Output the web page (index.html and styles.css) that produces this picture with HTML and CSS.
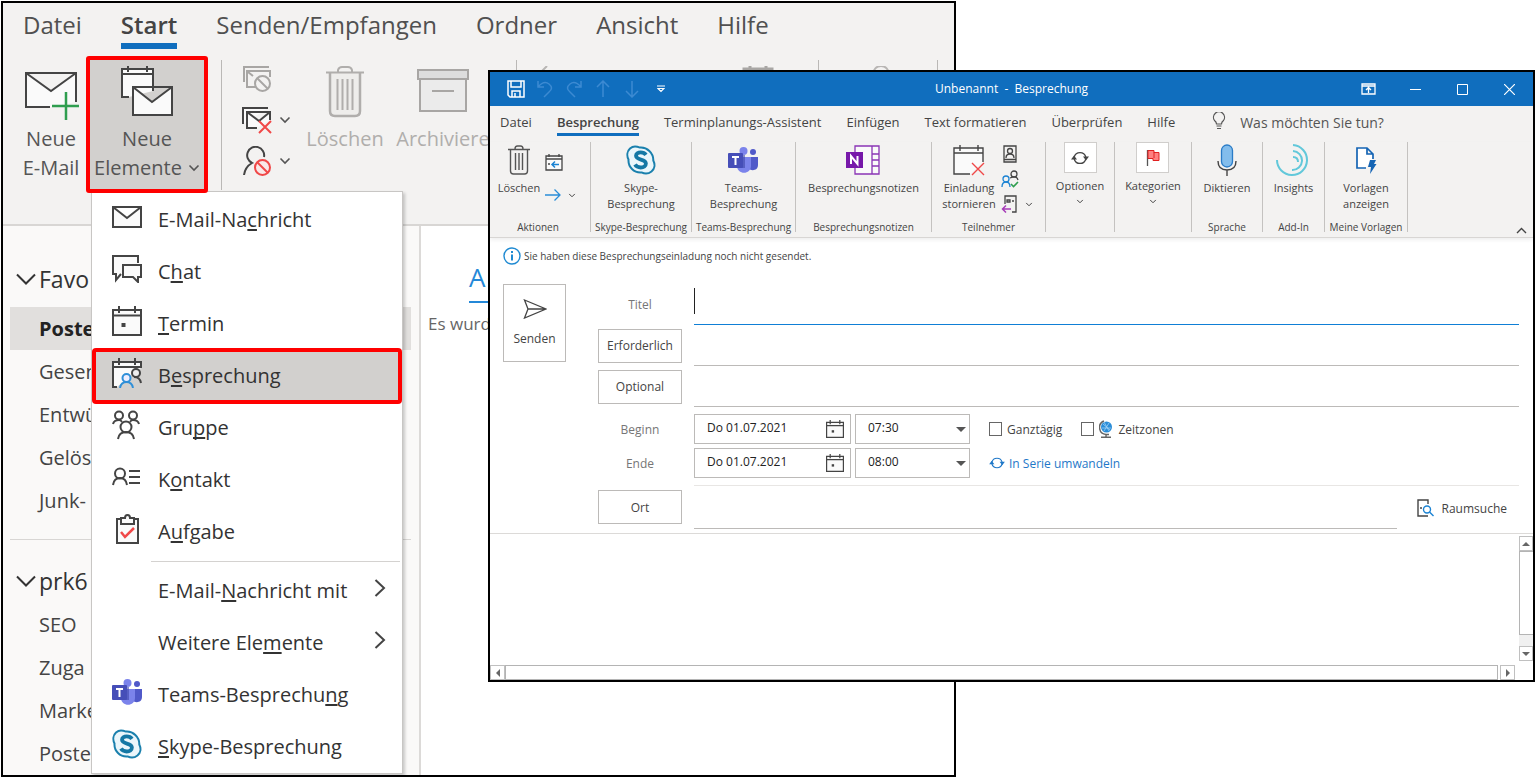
FILE: index.html
```html
<!DOCTYPE html>
<html lang="de">
<head>
<meta charset="utf-8">
<title>Unbenannt - Besprechung</title>
<link rel="stylesheet" href="styles.css">
</head>
<body>
<svg class="defs" aria-hidden="true">
  <symbol id="chevron" viewBox="0 0 12 8"><path d="M1.500 1.500 6 6l4.500-4.500" fill="none" stroke="currentColor" stroke-width="1.600"/></symbol>
  <symbol id="chevron-wide" viewBox="0 0 20 13"><path d="M1 1.500 10 10.500l9-9" fill="none" stroke="currentColor" stroke-width="2"/></symbol>
  <symbol id="arrow-right" viewBox="0 0 12 20"><path d="M1.500 2 10 10l-8.500 8" fill="none" stroke="#444" stroke-width="2"/></symbol>
  <symbol id="envelope" viewBox="0 0 30 22"><path d="M1 1h28v20H1zM1 1l14 11L29 1" fill="#fafafa" stroke="#444" stroke-width="2"/></symbol>
  <symbol id="calendar" viewBox="0 0 30 30"><path d="M1 4h28v25H1z" fill="#fafafa" stroke="#444" stroke-width="2"/><path d="M1 9.500h28M7 0v7M23 0v7" fill="none" stroke="#444" stroke-width="2"/><path d="M9.500 17h4v4h-4z" fill="#444"/></symbol>
  <symbol id="skype" viewBox="0 0 30 30"><path d="M9 1.500c2 0 3.500.5 5 1.100C21 2 27.500 8 27.300 15.500c2 4 1.400 8.500-1.800 11-3 2.400-6.800 2.500-10 .9C8 28 2 22 2.500 14.500c-2-4-1.200-8.500 1.500-11C5.500 2.200 7.200 1.500 9 1.500z" fill="#eaf6fb" stroke="#1a80ad" stroke-width="2"/><path d="M20 9.800c-1.300-1.800-3.200-2.500-5.300-2.500-2.700 0-4.700 1.400-4.700 3.500 0 5 9.900 2.500 9.900 7.700 0 2.500-2.200 4-5.200 4-2.400 0-4.500-.9-5.700-2.900" fill="none" stroke="#1478a5" stroke-width="3.800"/></symbol>
  <symbol id="teams" viewBox="0 0 30 26"><circle cx="15.500" cy="4" r="4" fill="#7b83eb"/><circle cx="25" cy="5" r="3" fill="#5059c9"/><path d="M20 10h10v8c0 6-8 7-10 2z" fill="#5059c9"/><path d="M9 10h14v9c0 9-14 9-14 0z" fill="#7b83eb"/><path d="M9 8h8v13H9z" fill="#4047a8" opacity=".6"/><rect y="6" width="15" height="15" rx="1" fill="#464eb8"/><path d="M4 10h7M7.500 10v8" stroke="#fff" stroke-width="2"/></symbol>
  <symbol id="trash" viewBox="0 0 38 52"><path d="M4 7v38q0 5 5 5h20q5 0 5-5V7" fill="currentColor" fill-opacity=".08" stroke="currentColor" stroke-width="2.500"/><path d="M0 6.500h38M12 6V4q1-3 4-3h6q3 0 4 3v2M11.500 13v31M16.500 13v31M21.500 13v31M26.500 13v31" fill="none" stroke="currentColor" stroke-width="2"/></symbol>
  <symbol id="sync" viewBox="0 0 18 16"><path d="M3.200 7A6 6 0 0 1 14.800 7M14.800 9A6 6 0 0 1 3.200 9" fill="none" stroke="currentColor" stroke-width="1.300"/><path d="M0 9.500 3 5.500l3 4zM12 6.500l3 4 3-4z" fill="currentColor"/></symbol>
</svg>

<main class="desktop">
<section class="window outlook">
  <nav class="tabs">
    <a href="#">Datei</a><a href="#" class="active">Start</a><a href="#">Senden/Empfangen</a><a href="#">Ordner</a><a href="#">Ansicht</a><a href="#">Hilfe</a>
  </nav>
  <div class="ribbon">
    <button class="tool new-mail">
      <svg width="54" height="52" viewBox="0 0 54 52"><path d="M26 41H2V7h50v29M2 7l25 18L52 7" fill="#fafafa" stroke="#444" stroke-width="2"/><path d="M42 26v28M28 40h27" stroke="#2f9e4f" stroke-width="2.500"/></svg>
      <span>Neue</span><span>E-Mail</span>
    </button>
    <button class="tool new-items">
      <svg width="54" height="52" viewBox="0 0 54 52"><path d="M9 31H2V3h31v22" fill="#fafafa" stroke="#444" stroke-width="2"/><path d="M2 8h31M8 0v6M27 0v6" stroke="#444" stroke-width="2"/><path d="M13 21h39v28H13zM13 21l19 15 20-15" fill="#fafafa" stroke="#444" stroke-width="2"/></svg>
      <span>Neue</span><span>Elemente <svg class="chev" width="12" height="8"><use href="#chevron"/></svg></span>
    </button>
    <i class="rule"></i>
    <div class="stack">
      <button aria-label="Ignorieren"><svg width="30" height="28" viewBox="0 0 30 28" fill="none" stroke="#a8a6a4" stroke-width="2"><path d="M2 17V2h25M14 22H5V6h23v6M6 7l5 4"/><circle cx="20.500" cy="18.500" r="7.500" fill="#f3f2f1"/><path d="m15 13 11 11"/></svg></button>
      <button aria-label="Aufräumen"><svg width="30" height="28" viewBox="0 0 30 28" fill="none" stroke="#444" stroke-width="2"><path d="M1 18V2h25M15 22H5V6h23v8M5 6l12 9L28 6" fill="#fafafa"/><path d="m17 15 12 12M29 15 17 27" stroke="#f04848"/></svg><svg class="chev" width="12" height="8"><use href="#chevron"/></svg></button>
      <button aria-label="Junk-E-Mail"><svg width="30" height="30" viewBox="0 0 30 30" fill="none" stroke="#444" stroke-width="2"><path d="M2 29q1-8 8-12a8.500 8.500 0 1 1 12-6"/><circle cx="20.500" cy="21.500" r="7.500" stroke="#f04848" fill="#f9e8e8"/><path d="m15 16 11 11" stroke="#f04848"/></svg><svg class="chev" width="12" height="8"><use href="#chevron"/></svg></button>
    </div>
    <button class="tool delete" disabled><svg width="38" height="52"><use href="#trash"/></svg><span>Löschen</span></button>
    <button class="tool archive" disabled><svg width="52" height="52" viewBox="0 0 52 52"><path d="M3 12h46v33H3z" fill="#ebebeb" stroke="#a8a6a4" stroke-width="2"/><path d="M1 4h50v9H1z" fill="#ddd" stroke="#a8a6a4" stroke-width="2"/><path d="M15 25h22" stroke="#a8a6a4" stroke-width="2"/></svg><span>Archiviere</span></button>
    <div class="more">
      <i class="rule"></i>
      <svg width="30" height="30" viewBox="0 0 30 30" fill="none" stroke="#b8b6b4" stroke-width="2"><path d="M12 0 2 10l10 10M2 10h26"/></svg>
      <svg class="meet" width="32" height="30" viewBox="0 0 32 30" fill="none" stroke="#a8a6a4" stroke-width="3"><path d="M2 28V3h28v25M8 0v6M24 0v6"/></svg>
      <i class="rule"></i>
      <svg class="person" width="32" height="30" viewBox="0 0 32 30" fill="none" stroke="#b8b6b4" stroke-width="2"><circle cx="10" cy="8" r="8"/><path d="M24 5h8"/></svg>
      <i class="rule"></i>
    </div>
  </div>
  <div class="content">
    <aside class="folders">
      <h2><svg width="20" height="13"><use href="#chevron-wide"/></svg>Favo</h2>
      <ul><li class="selected">Poste</li><li>Gesen</li><li>Entwü</li><li>Gelös</li><li>Junk-</li></ul>
      <hr>
      <h2><svg width="20" height="13"><use href="#chevron-wide"/></svg>prk6</h2>
      <ul><li>SEO</li><li>Zuga</li><li>Marke</li><li>Poste</li></ul>
    </aside>
    <div class="list"><a href="#">A</a><p>Es wurd</p></div>
  </div>

  <div class="menu" role="menu">
    <button role="menuitem"><svg width="30" height="22"><use href="#envelope"/></svg><span>E-Mail-Na<u>c</u>hricht</span></button>
    <button role="menuitem"><svg width="30" height="28" viewBox="0 0 30 28" fill="#fafafa" stroke="#444" stroke-width="2"><path d="M26 8V1H1v18h3v6l5-6"/><path d="M11 10h18v12h-3v5l-5-5H11z"/></svg><span>C<u>h</u>at</span></button>
    <button role="menuitem"><svg width="30" height="30"><use href="#calendar"/></svg><span><u>T</u>ermin</span></button>
    <button role="menuitem" class="marked"><svg width="30" height="30" viewBox="0 0 30 30" fill="none" stroke="#444" stroke-width="2"><path d="M5 29H1V4h28v6" fill="#fafafa"/><path d="M1 9h28M7 0v7M23 0v7"/><circle cx="24" cy="15" r="4" fill="#eee"/><path d="M22 19q6 0 7 6"/><circle cx="14.500" cy="20" r="4" stroke="#2f8fd8" fill="#eef"/><path d="M8 30q1-6 6.500-6t6.500 6" stroke="#2f8fd8"/></svg><span>B<u>e</u>sprechung</span></button>
    <button role="menuitem"><svg width="30" height="30" viewBox="0 0 30 30" fill="none" stroke="#444" stroke-width="2"><circle cx="7" cy="5.500" r="4"/><circle cx="21" cy="5.500" r="4"/><circle cx="14" cy="17" r="5.500"/><path d="M1 14q1-4 6-4 2 0 3 2M27 14q-1-4-6-4-2 0-3 2M6 29q1-7 8-7t8 7"/></svg><span>Gru<u>p</u>pe</span></button>
    <button role="menuitem"><svg width="30" height="20" viewBox="0 0 30 20" fill="none" stroke="#444" stroke-width="2"><circle cx="8" cy="6.500" r="5"/><path d="M1 18q1-7 7-7t7 7M17 4h11M17 10h11M17 16h11"/></svg><span>K<u>o</u>ntakt</span></button>
    <button role="menuitem"><svg width="30" height="30" viewBox="0 0 30 30" fill="none" stroke="#444" stroke-width="2"><path d="M5 5h21v24H5z" fill="#fafafa"/><path d="M9 10V4h4q0-3 2.500-3T18 4h4v6z" fill="#fafafa"/><path d="m9 18 4 5 9-9" stroke="#f04848" stroke-width="2.500"/></svg><span>A<u>u</u>fgabe</span></button>
    <hr>
    <button role="menuitem"><i></i><span>E-Mail-<u>N</u>achricht mit</span><svg class="sub" width="12" height="20"><use href="#arrow-right"/></svg></button>
    <button role="menuitem"><i></i><span>Weitere Ele<u>m</u>ente</span><svg class="sub" width="12" height="20"><use href="#arrow-right"/></svg></button>
    <button role="menuitem"><svg width="30" height="26"><use href="#teams"/></svg><span>Teams-Besprechu<u>n</u>g</span></button>
    <button role="menuitem"><svg width="30" height="30"><use href="#skype"/></svg><span><u>S</u>kype-Besprechung</span></button>
  </div>
</section>

<section class="window meeting">
  <header class="titlebar">
    <div class="quick">
      <button aria-label="Speichern"><svg width="18" height="18" viewBox="0 0 18 18" fill="none" stroke="#fff" stroke-width="1.500"><path d="M1 1h16v16H3l-2-2zM4 1v6h10V1M5 17v-6h8v6M8 13v4"/></svg></button>
      <button class="dim" aria-label="Rückgängig"><svg width="16" height="18" viewBox="0 0 16 18" fill="none" stroke="currentColor" stroke-width="1.500"><path d="M1 1v6h6M1 7q6-7 11-3 5 4 0 8l-5 5"/></svg></button>
      <button class="dim" aria-label="Wiederholen"><svg width="16" height="18" viewBox="0 0 16 18" fill="none" stroke="currentColor" stroke-width="1.500"><path d="M15 1v6H9M15 7Q9 0 4 4q-5 4 0 8l5 5"/></svg></button>
      <button class="dim" aria-label="Vorheriges Element"><svg width="14" height="18" viewBox="0 0 14 18" fill="none" stroke="currentColor" stroke-width="1.500"><path d="M7 17V1M1 7l6-6 6 6"/></svg></button>
      <button class="dim" aria-label="Nächstes Element"><svg width="14" height="18" viewBox="0 0 14 18" fill="none" stroke="currentColor" stroke-width="1.500"><path d="M7 1v16M1 11l6 6 6-6"/></svg></button>
      <button aria-label="Anpassen"><svg width="8" height="8" viewBox="0 0 8 8" fill="none" stroke="#fff" stroke-width="1.200"><path d="M0 1h8M1 3.500 4 6.500l3-3z"/></svg></button>
    </div>
    <h1>Unbenannt&nbsp; -&nbsp; Besprechung</h1>
    <div class="controls">
      <button aria-label="Menüband"><svg width="15" height="12" viewBox="0 0 15 12" fill="none" stroke="#fff" stroke-width="1.300"><path d="M1 1h13v10H1zM1 3h13M7.500 10V5M5 7l2.500-2.500L10 7"/></svg></button>
      <button aria-label="Minimieren"><svg width="11" height="11" viewBox="0 0 11 11"><path d="M0 5.500h11" stroke="#fff"/></svg></button>
      <button aria-label="Maximieren"><svg width="11" height="11" viewBox="0 0 11 11"><path d="M.5.5h10v10H.5z" fill="none" stroke="#fff"/></svg></button>
      <button aria-label="Schließen"><svg width="11" height="11" viewBox="0 0 11 11"><path d="m0 0 11 11M11 0 0 11" stroke="#fff" stroke-width="1.200"/></svg></button>
    </div>
  </header>
  <nav class="tabs">
    <a href="#">Datei</a><a href="#" class="active">Besprechung</a><a href="#">Terminplanungs-Assistent</a><a href="#">Einfügen</a><a href="#">Text formatieren</a><a href="#">Überprüfen</a><a href="#">Hilfe</a>
    <label class="tellme"><svg width="14" height="18" viewBox="0 0 14 18" fill="none" stroke="#555" stroke-width="1.200"><path d="M4.500 12q0-2-2-3.500a5.500 5.500 0 1 1 9 0q-2 1.500-2 3.500zM4.500 14h5M5 16.500h4"/></svg><input placeholder="Was möchten Sie tun?" aria-label="Was möchten Sie tun?"></label>
  </nav>
  <div class="ribbon">
    <div class="group g-actions">
      <div class="items">
        <button class="tool"><svg width="32" height="30" viewBox="0 0 32 30"><g fill="none" stroke="#555" stroke-width="1.400"><path d="M7.500 5v21q0 3 3 3h11q3 0 3-3V5M5 4.500h22M12 4q0-3 2.500-3h3Q20 1 20 4M12.500 8v17M16 8v17M19.500 8v17"/></g></svg><span>Löschen</span></button>
        <div class="side two">
          <button aria-label="In Kalender kopieren"><svg width="18" height="18" viewBox="0 0 18 18" fill="none" stroke="#444" stroke-width="1.300"><path d="M1 3h16v14H1zM1 6h16M4 1v3M14 1v3" fill="#fafafa"/><path d="M14 11.500H7M10 8.500l-3 3 3 3" stroke="#1b83d3" stroke-width="1.500"/><path d="M3 11h2" /></svg></button>
          <button aria-label="Weiterleiten"><svg width="17" height="14" viewBox="0 0 17 14"><path d="M0 7h15M9.500 1.500 15 7l-5.500 5.500" fill="none" stroke="#2a8dd8" stroke-width="1.300"/></svg><svg class="chev" width="8" height="5"><use href="#chevron"/></svg></button>
        </div>
      </div>
      <p>Aktionen</p>
    </div>
    <div class="group g-skype"><div class="items"><button class="tool"><svg width="30" height="30"><use href="#skype"/></svg><span>Skype-</span><span>Besprechung</span></button></div><p>Skype-Besprechung</p></div>
    <div class="group g-teams"><div class="items"><button class="tool"><svg width="30" height="26"><use href="#teams"/></svg><span>Teams-</span><span>Besprechung</span></button></div><p>Teams-Besprechung</p></div>
    <div class="group g-notes"><div class="items"><button class="tool"><svg width="34" height="30" viewBox="0 0 34 30" fill="none" stroke="#8a35b5" stroke-width="1.300"><path d="M9 1h24v28H9z" fill="#fafafa"/><path d="M26 1v28M26 9h7M26 15h7M26 21h7"/><path d="M0 7h17v16H0z" fill="#7719aa" stroke="none"/><path d="M5 19v-8l6.500 8v-8" stroke="#fff" stroke-width="2"/></svg><span>Besprechungsnotizen</span></button></div><p>Besprechungsnotizen</p></div>
    <div class="group g-people">
      <div class="items">
        <button class="tool"><svg width="32" height="32" viewBox="0 0 32 32" fill="none" stroke="#444" stroke-width="1.400"><path d="M17 30H1V4h29v14" fill="#fafafa"/><path d="M1 9h29M7 1v6M25 1v6"/><path d="m19 19 12 12M31 19 19 31" stroke="#f04848"/></svg><span>Einladung</span><span>stornieren</span></button>
        <div class="side">
          <button aria-label="Adressbuch"><svg width="18" height="18" viewBox="0 0 18 18" fill="none" stroke="#444" stroke-width="1.300"><path d="M3 1h12v16H3zM3 14.500h12"/><circle cx="9" cy="6" r="2.500"/><path d="M5 13q0-4 4-4t4 4"/></svg></button>
          <button aria-label="Namen überprüfen"><svg width="18" height="18" viewBox="0 0 18 18" fill="none" stroke="#444" stroke-width="1.300"><circle cx="13" cy="4" r="3"/><path d="M9 8q7-3 8 2"/><circle cx="5" cy="9" r="3" stroke="#1b83d3"/><path d="M1 17q0-5 4-5t4 5" stroke="#1b83d3"/><path d="m10 14 2.500 2.500L17 12" stroke="#2f9e4f" stroke-width="1.600"/></svg></button>
          <button aria-label="Antwortoptionen"><svg width="18" height="18" viewBox="0 0 18 18" fill="none" stroke="#444" stroke-width="1.300"><path d="M4 9V1h11v16H11M6 5h3v2H6zM11 6h2"/><path d="M10 14H2M5 10.500 1.500 14 5 17.500" stroke="#a63bb8" stroke-width="1.500"/></svg><svg class="chev" width="8" height="5"><use href="#chevron"/></svg></button>
        </div>
      </div>
      <p>Teilnehmer</p>
    </div>
    <div class="group g-options"><div class="items"><button class="tool boxed"><em><svg width="18" height="16"><use href="#sync"/></svg></em><span>Optionen</span><svg class="chev" width="8" height="5"><use href="#chevron"/></svg></button></div></div>
    <div class="group g-cat"><div class="items"><button class="tool boxed"><em><svg width="14" height="18" viewBox="0 0 14 18"><path d="M1.500 1v16" stroke="#555" stroke-width="1.300"/><path d="M2 1.500h6v2h5v8H7v-2H2z" fill="#ff8080" stroke="#e02020"/><path d="M8 3v6" stroke="#e02020"/></svg></em><span>Kategorien</span><svg class="chev" width="8" height="5"><use href="#chevron"/></svg></button></div></div>
    <div class="group g-speech"><div class="items"><button class="tool"><svg width="20" height="32" viewBox="0 0 20 32" fill="none"><rect x="4.500" y="1" width="11" height="22" rx="5.500" fill="#83bdec" stroke="#2a7cc7" stroke-width="1.300"/><path d="M1 17q0 9 9 9t9-9M10 26v6" stroke="#444" stroke-width="1.400"/></svg><span>Diktieren</span></button></div><p>Sprache</p></div>
    <div class="group g-addin"><div class="items"><button class="tool"><svg width="34" height="32" viewBox="0 0 34 32" fill="none" stroke="#62c8da" stroke-width="2"><path d="M17 1a15 15 0 1 1-16 15M17 7a9.500 9.500 0 1 1-1 19M17 13q5 0 5 5"/></svg><span>Insights</span></button></div><p>Add-In</p></div>
    <div class="group g-templates"><div class="items"><button class="tool"><svg width="22" height="28" viewBox="0 0 22 28"><path d="M11 22H2V2h10l6 6v5M12 2v6h6" fill="#fff" stroke="#1464b4" stroke-width="1.700"/><path d="m15 14h6l-2 4h2.500L15 28l1-7h-3z" fill="#1464b4"/></svg><span>Vorlagen</span><span>anzeigen</span></button></div><p>Meine Vorlagen</p></div>
    <button class="collapse" aria-label="Menüband reduzieren"><svg width="11" height="7" viewBox="0 0 11 7"><path d="m1 6 4.500-4.500L10 6" fill="none" stroke="#444" stroke-width="1.400"/></svg></button>
  </div>
  <p class="info"><svg width="18" height="18" viewBox="0 0 18 18"><circle cx="9" cy="9" r="8" fill="#fff" stroke="#1f8ad2" stroke-width="1.400"/><path d="M9 7.500v6M9 4v2" stroke="#1f8ad2" stroke-width="2"/></svg>Sie haben diese Besprechungseinladung noch nicht gesendet.</p>
  <form class="form">
    <button type="button" class="send"><svg width="24" height="20" viewBox="0 0 24 20"><path d="M1.500 1 23 10 1.500 19 5 10zM5 10h18" fill="#fff" stroke="#444" stroke-width="1.300"/></svg>Senden</button>
    <div class="fields">
      <div class="row"><label for="title">Titel</label><input id="title" class="line focus"><i class="caret"></i></div>
      <div class="row"><button type="button">Erforderlich</button><input class="line" aria-label="Erforderlich"></div>
      <div class="row"><button type="button">Optional</button><input class="line" aria-label="Optional"></div>
      <div class="row when first"><label for="d1">Beginn</label>
        <div class="date"><input id="d1" value="Do 01.07.2021"><button type="button" aria-label="Kalender"><svg width="18" height="18"><use href="#calendar"/></svg></button></div>
        <div class="time"><select aria-label="Beginn Uhrzeit"><option>07:30</option></select></div>
        <label class="check"><input type="checkbox">Ganztägig</label>
        <label class="check zones"><input type="checkbox"><svg width="14" height="18" viewBox="0 0 14 18"><circle cx="7.500" cy="7" r="5.500" fill="#2a8dd8"/><path d="M4 4l7 6M10 3l-5 8M3 8h9M5 2l5 9" stroke="#9fd0f5" stroke-width=".8"/><path d="M5 1a7 7 0 0 0 2 13.500h3M7 14v3M2 17.300h10" fill="none" stroke="#666" stroke-width="1.500"/></svg>Zeitzonen</label>
      </div>
      <div class="row when"><label for="d2">Ende</label>
        <div class="date"><input id="d2" value="Do 01.07.2021"><button type="button" aria-label="Kalender"><svg width="18" height="18"><use href="#calendar"/></svg></button></div>
        <div class="time"><select aria-label="Ende Uhrzeit"><option>08:00</option></select></div>
        <a href="#" class="series"><svg width="16" height="14"><use href="#sync"/></svg>In Serie umwandeln</a>
      </div>
      <div class="row place"><button type="button">Ort</button><div class="where"><input class="line" aria-label="Ort"><a href="#" class="rooms"><svg width="17" height="18" viewBox="0 0 17 18" fill="none" stroke="#444" stroke-width="1.400"><path d="M11 17H1V1h10v4M3 9h2"/><circle cx="10" cy="10.500" r="3.500" stroke="#1b83d3"/><path d="m12.500 13 4 4" stroke="#1b83d3"/></svg>Raumsuche</a></div></div>
    </div>
  </form>
  <div class="editor">
    <div class="paper" contenteditable="true" role="textbox" aria-label="Nachricht"></div>
    <div class="vbar"><b class="up"></b><span></span><b class="down"></b></div>
    <div class="hbar"><b class="left"></b><span></span><b class="right"></b></div>
  </div>
</section>
</main>
</body>
</html>
```
FILE: styles.css
```css
* { box-sizing: border-box; }
body { margin: 0; background: #fff; color: #444; font-family: "Open Sans", "Noto Sans", sans-serif; }
h1, h2, p, ul { margin: 0; padding: 0; font-weight: 400; }
ul { list-style: none; }
a { color: inherit; text-decoration: none; }
button, input, select { margin: 0; padding: 0; border: 0; background: none; color: inherit; font: inherit; outline: 0; }
svg { display: block; flex: none; }
.defs { position: absolute; width: 0; height: 0; }
.desktop { position: relative; height: 100vh; overflow: hidden; }
.window { position: absolute; border: 2px solid #000; background: #fff; display: flex; flex-direction: column; }
.tabs { display: flex; white-space: nowrap; }
.ribbon { display: flex; background: #f3f2f1; }
.tool { display: flex; flex-direction: column; align-items: center; white-space: nowrap; }

/* Mail window */
.outlook { left: 1px; top: 1px; width: 62.2%; height: calc(100% - 2px); font-size: 20px; overflow: hidden; }
.outlook .tabs { gap: 39px; height: 53px; padding-left: 20px; background: #f3f2f1; font-size: 24px; color: #505050; }
.outlook .tabs a { height: 46px; padding-top: 4px; line-height: 36px; border-bottom: 6px solid transparent; }
.outlook .tabs .active { border-color: #106ebe; font-weight: 600; color: #444; }
.outlook .ribbon { height: 170px; padding-left: 13px; align-items: flex-start; border-bottom: 2px solid #d8d6d4; color: #555; }
.outlook .tool { height: 137px; padding-top: 10px; line-height: 29px; flex: none; }
.outlook .tool > svg { margin-bottom: 6px; overflow: visible; }
.outlook .tool span { display: flex; align-items: center; gap: 6px; }
.new-mail { width: 70px; }
.tool.new-items { position: relative; z-index: 3; width: 122px; padding-top: 6px; border: 4px solid #f00; border-radius: 3px; background: #d2d0ce; }
.tool:disabled { color: #b0aeac; }
.delete { width: 90px; }
.archive { width: 106px; }
.rule { width: 1px; height: 130px; margin-top: 4px; background: #bab8b6; }
.outlook .ribbon > .rule { margin-left: 13px; }
.stack { display: flex; flex-direction: column; width: 78px; padding-left: 20px; padding-top: 2px; }
.stack button { display: flex; align-items: center; gap: 7px; height: 41px; }
.more { display: flex; flex: 1; gap: 18px; padding-left: 20px; }
.more svg { margin-top: 10px; }
.more .meet { margin-left: 159px; margin-right: 26px; }
.more .person { margin-left: 34px; margin-right: 16px; }
.content { display: flex; flex: 1; }
.folders { position: relative; width: 418px; padding-top: 31px; background: #faf9f8; border-right: 2px solid #dcdad8; overflow: hidden; }
.folders h2 { display: flex; align-items: center; gap: 3px; height: 44px; margin-bottom: 6px; padding-left: 13px; font-size: 23px; color: #333; }
.folders li { height: 43px; margin: 0 8px 0 7px; padding-left: 29px; line-height: 43px; }
.folders .selected { background: #e1dfdd; font-weight: 700; color: #222; }
.folders hr { margin: 17px 8px 19px 7px; border: 0; border-top: 1px solid #d8d6d4; }
.folders hr + h2 { margin-bottom: 0; }
.list { flex: 1; padding: 27px 0 0 7px; font-size: 17px; color: #666; }
.list a { display: block; width: 80px; margin-left: 41px; line-height: 48px; font-size: 26px; color: #2488d8; border-bottom: 2px solid #2488d8; }
.list p { margin-top: 8px; line-height: 26px; }

.menu { position: absolute; z-index: 2; left: 88px; top: 188px; width: 312px; padding: 2px 2px 0; background: #fff; border: 1px solid #c8c6c4; box-shadow: 2px 2px 3px #0003; color: #333; }
.menu button { display: flex; align-items: center; gap: 16px; width: 100%; height: 52px; padding: 0 0 2px 18px; text-align: left; white-space: nowrap; }
.menu button > svg { margin-bottom: 4px; }
.menu i { width: 30px; }
.menu u { text-underline-offset: 2px; text-decoration-thickness: 2px; text-decoration-skip-ink: none; }
.menu .sub { margin-left: auto; margin-right: 14px; }
.menu .marked { background: #d2d0ce; outline: 4px solid #f00; outline-offset: -2px; border-radius: 2px; }
.menu hr { margin: 3px 0 3px 57px; border: 0; border-top: 1px solid #d4d2d0; }

/* Meeting window */
.meeting { left: 488px; right: 1px; top: 70px; height: 612px; font-size: 12px; }
.titlebar { display: grid; grid-template-columns: 1fr auto 1fr; align-items: center; height: 34px; background: #106ebe; color: #fff; }
.titlebar h1 { font-size: 12px; line-height: 16px; }
.quick { display: flex; padding-left: 11px; }
.quick button { display: grid; place-items: center; width: 29px; height: 34px; }
.dim { color: #3c8ad2; }
.controls { display: flex; justify-content: flex-end; }
.controls button { display: grid; place-items: center; width: 47px; height: 34px; }
.meeting .tabs { gap: 25px; height: 36px; padding: 6px 0 0 10px; background: #f3f2f1; font-size: 13px; }
.meeting .tabs a { height: 24px; line-height: 20px; border-bottom: 3px solid transparent; }
.meeting .tabs .active { border-color: #106ebe; font-weight: 600; }
.tellme { display: flex; gap: 14px; height: 20px; margin-left: 12px; font-size: 14px; }
.tellme input { width: 170px; }
.tellme input::placeholder { color: #555; opacity: 1; }
.meeting .ribbon { position: relative; height: 96px; border-bottom: 1px solid #d8d6d4; box-shadow: 0 2px 4px #0001; }
.group { display: flex; flex-direction: column; height: 90px; flex: none; border-right: 1px solid #c4c2c0; }
.group .items { display: flex; flex: 1; justify-content: center; }
.group p { font-size: 10px; line-height: 10px; text-align: center; white-space: nowrap; }
.g-actions { width: 101px; }
.g-actions .items { padding-right: 6px; }
.g-people .items { padding-right: 2px; }
.g-actions p { padding-right: 4px; }
.g-skype { width: 101px; }
.g-teams { width: 104px; }
.g-notes { width: 136px; }
.g-people { width: 114px; }
.g-options { width: 69px; }
.g-cat { width: 77px; }
.g-speech { width: 71px; }
.g-addin { width: 62px; }
.g-templates { width: 83px; }
.group .tool { padding-top: 2px; line-height: 16px; font-size: 11px; }
.group .tool > svg:first-child { height: 32px; margin-bottom: 4px; }
.group .tool.boxed { padding-top: 0; }
.boxed em { display: grid; place-items: center; width: 33px; height: 31px; margin-bottom: 5px; background: #fff; border: 1px solid #d0cecc; }
.boxed .chev { margin-top: 5px; }
.side { display: flex; flex-direction: column; gap: 7px; padding: 3px 0 0 5px; }
.side.two { gap: 15px; padding-top: 11px; }
.side button { display: flex; align-items: center; gap: 6px; height: 18px; }
.collapse { position: absolute; right: 6px; bottom: 3px; }

.info { display: flex; align-items: center; gap: 3px; height: 46px; padding: 0 0 10px 13px; font-size: 10px; }
.form { display: flex; align-items: flex-start; padding: 0 14px 4px 13px; border-bottom: 1px solid #dcdad8; }
.send { display: flex; flex-direction: column; align-items: center; justify-content: center; gap: 11px; width: 63px; height: 78px; border: 1px solid #bcbab8; flex: none; font-size: 12px; }
.fields { flex: 1; margin-left: 32px; }
.row { position: relative; display: flex; align-items: center; gap: 12px; height: 41px; }
.row > label:first-child, .row > button { width: 84px; text-align: center; flex: none; }
.row > label:first-child { color: #767676; }
.row > button { height: 34px; border: 1px solid #bcbab8; }
.line { flex: 1; min-width: 0; height: 100%; border-bottom: 1px solid #bcbab8; }
.line.focus { border-bottom: 1px solid #0f7fd6; }
.caret { position: absolute; left: 96px; top: 4px; width: 1px; height: 26px; background: #222; }
.row.when { height: 34px; }
.row.when.first { margin-top: 5px; }
.date, .time { display: flex; align-items: center; height: 30px; border: 1px solid #bcbab8; color: #222; }
.date { width: 157px; padding: 0 6px 0 12px; }
.date input { flex: 1; min-width: 0; padding-bottom: 4px; }
.time { position: relative; width: 115px; margin-left: -8px; }
.time select { width: 100%; height: 100%; padding: 0 0 4px 12px; appearance: none; }
.time::after { content: ""; position: absolute; right: 3px; top: 12px; border: 5px solid transparent; border-top-color: #555; border-bottom: 0; pointer-events: none; }
.check { display: flex; align-items: center; gap: 5px; margin-left: 7px; }
.check input { width: 13px; height: 14px; appearance: none; border: 1px solid #666; background: #fff; }
.series { display: flex; align-items: center; gap: 4px; margin-left: 7px; color: #1f78c8; }
.row.place { height: 44px; margin-top: 5px; }
.where { display: flex; flex: 1; height: 100%; padding-top: 1px; border-top: 1px solid #e8e6e4; }
.rooms { display: flex; align-items: center; gap: 8px; margin-left: 20px; margin-right: 12px; }
.editor { display: grid; grid-template: 1fr 15px / 1fr 14px; flex: 1; }
.paper { outline: 0; }
.vbar { display: flex; flex-direction: column; margin: 2px 0 4px; background: #f0f0f0; }
.vbar span { flex: 1; margin-bottom: 11px; background: #fff; border: 1px solid #b4b4b4; border-right: 0; }
.editor b { display: grid; place-items: center; height: 15px; background: #fff; border: 1px solid #c0c0c0; }
.editor b::after { content: ""; border: 4px solid transparent; }
.editor .up::after { border-bottom-color: #666; border-top: 0; }
.editor .down::after { border-top-color: #666; border-bottom: 0; }
.hbar { grid-column: 1 / -1; display: flex; margin-right: 18px; }
.hbar b { width: 15px; }
.hbar span { flex: 1; border: 1px solid #b4b4b4; margin-right: 2px; }
.editor .left::after { border-right-color: #666; border-left: 0; }
.editor .right::after { border-left-color: #666; border-right: 0; }
```
